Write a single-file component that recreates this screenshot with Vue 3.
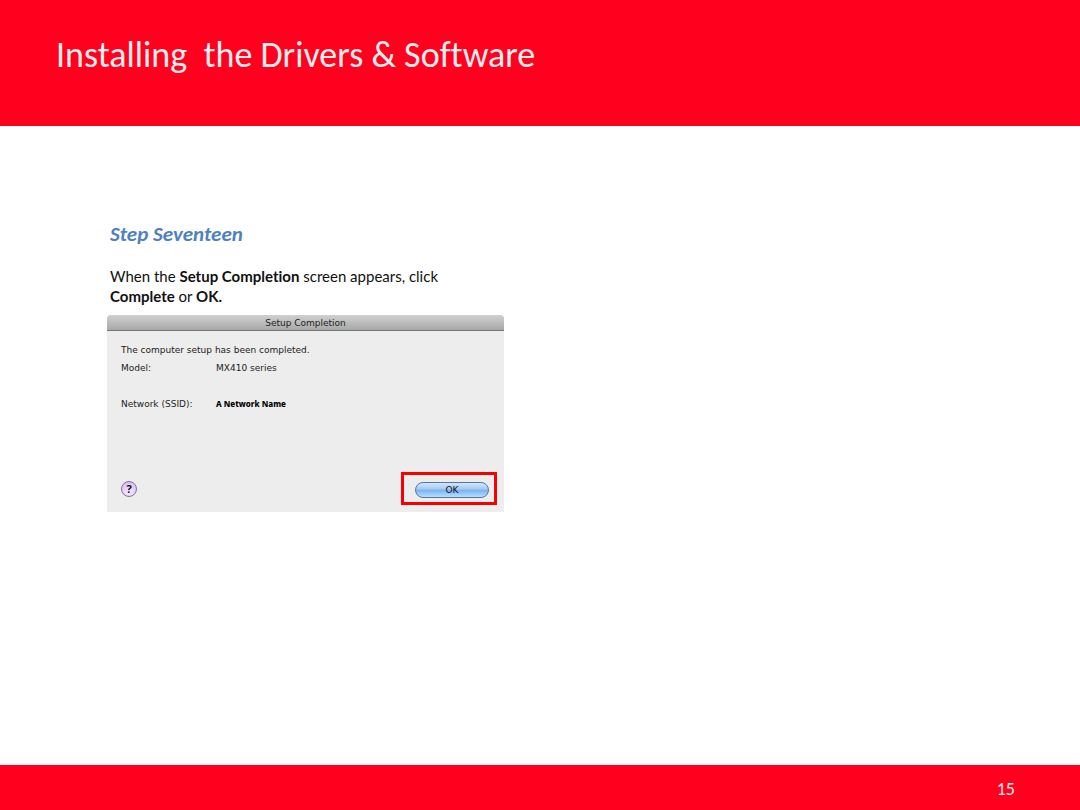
<script setup>
const details = [
  { label: 'Model:', value: 'MX410 series', network: false },
  { label: 'Network (SSID):', value: 'A Network Name', network: true },
]
</script>

<template>
  <div class="page">
    <header class="banner">
      <h1>Installing&nbsp; the Drivers &amp; Software</h1>
    </header>

    <main class="content">
      <h2>Step Seventeen</h2>
      <p class="intro">
        When the <strong>Setup Completion</strong> screen appears, click
        <strong>Complete</strong> or <strong>OK.</strong>
      </p>

      <section class="dialog" aria-labelledby="dialog-title">
        <h3 id="dialog-title" class="titlebar">Setup Completion</h3>
        <div class="dialog-body">
          <p class="message">The computer setup has been completed.</p>
          <dl class="details">
            <template v-for="item in details" :key="item.label">
              <dt>{{ item.label }}</dt>
              <dd :class="{ network: item.network }">{{ item.value }}</dd>
            </template>
          </dl>
          <div class="actions">
            <button class="help" type="button" aria-label="Help">?</button>
            <div class="highlight">
              <button class="ok" type="button">OK</button>
            </div>
          </div>
        </div>
      </section>
    </main>

    <footer class="footer">15</footer>
  </div>
</template>

<style>
body {
  margin: 0;
  background: #fff;
}
</style>

<style scoped>
.page {
  display: flex;
  flex-direction: column;
  min-height: 100vh;
  font-family: Carlito, Lato, sans-serif;
  font-variant-ligatures: none;
  color: #111;
}

h1,
h2,
h3,
p,
dl,
dd {
  margin: 0;
}

.banner {
  box-sizing: border-box;
  min-height: 126px;
  padding: 35px 56px;
  background: #ff001e;
}

.banner h1 {
  font-size: 36px;
  line-height: 40px;
  font-weight: 400;
  color: #f2eded;
}

.content {
  flex: 1;
  padding: 96px 107px 40px;
}

.content h2 {
  padding-left: 3px;
  font-size: 21px;
  line-height: 24px;
  font-style: italic;
  font-weight: 700;
  color: #4f81bd;
}

.intro {
  max-width: 350px;
  padding: 20px 0 9px 3px;
  font-family: Lato, sans-serif;
  font-size: 15px;
  line-height: 20px;
}

.dialog {
  max-width: 397px;
  overflow: hidden;
  border-radius: 4px 4px 0 0;
  background: #ededed;
  font-family: "DejaVu Sans", sans-serif;
  font-size: 9px;
  line-height: 12px;
  color: #222;
}

.titlebar {
  height: 15px;
  border-bottom: 1px solid #777;
  background: linear-gradient(#d0d0d0, #a8a8a8);
  font-size: 9px;
  line-height: 16px;
  font-weight: 400;
  text-align: center;
}

.dialog-body {
  padding: 13px 7px 7px 14px;
}

.details {
  display: grid;
  grid-template-columns: 95px 1fr;
  row-gap: 24px;
  padding-top: 6px;
}

.details .network {
  font-family: "Noto Sans", sans-serif;
  font-size: 8px;
  font-weight: 800;
  color: #000;
}

.actions {
  display: flex;
  align-items: center;
  justify-content: space-between;
  padding-top: 62px;
}

.help {
  width: 16px;
  height: 16px;
  padding: 0;
  border: 1px solid #88709c;
  border-radius: 50%;
  background: radial-gradient(circle at 50% 75%, #f5eaff, #d3b5f2);
  font: 700 11px/14px "Noto Sans", sans-serif;
  color: #111;
}

.highlight {
  box-sizing: border-box;
  width: 96px;
  height: 33px;
  padding: 7px 5px 7px 11px;
  border: 3px solid #f90000;
}

.ok {
  display: block;
  width: 100%;
  height: 16px;
  padding: 0;
  border: 1px solid #56749e;
  border-radius: 8px;
  background: linear-gradient(#d4e6fa, #a1c8f3 45%, #79b0ee 50%, #b5e1ff);
  font: 400 9px/14px "DejaVu Sans", sans-serif;
  color: #111;
}

.footer {
  box-sizing: border-box;
  min-height: 45px;
  padding: 14px 65px 11px;
  background: #ff001e;
  font-size: 18px;
  line-height: 20px;
  text-align: right;
  color: #f5e5e5;
}
</style>
